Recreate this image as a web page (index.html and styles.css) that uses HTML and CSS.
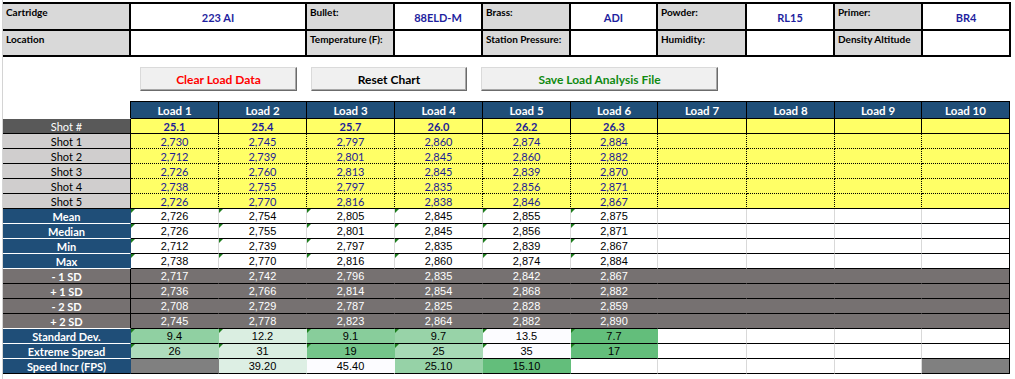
FILE: index.html
```html
<!DOCTYPE html>
<html>
<head>
<meta charset="utf-8">
<link rel="stylesheet" href="styles.css">
</head>
<body>
<div class="sheet">
  <div class="info">
    <div class="lbl">Cartridge</div><div class="val">223 AI</div>
    <div class="lbl">Bullet:</div><div class="val">88ELD-M</div>
    <div class="lbl">Brass:</div><div class="val">ADI</div>
    <div class="lbl">Powder:</div><div class="val">RL15</div>
    <div class="lbl">Primer:</div><div class="val">BR4</div>
    <div class="lbl">Location</div><div class="val"></div>
    <div class="lbl">Temperature (F):</div><div class="val"></div>
    <div class="lbl">Station Pressure:</div><div class="val"></div>
    <div class="lbl">Humidity:</div><div class="val"></div>
    <div class="lbl">Density Altitude</div><div class="val"></div>
  </div>

  <div class="buttons">
    <div class="btn red">Clear Load Data</div>
    <div class="btn">Reset Chart</div>
    <div class="btn grn">Save Load Analysis File</div>
  </div>

  <div class="tbl">
    <div class="corner"></div>
    <div class="hd">Load 1</div><div class="hd">Load 2</div><div class="hd">Load 3</div><div class="hd">Load 4</div><div class="hd">Load 5</div><div class="hd">Load 6</div><div class="hd">Load 7</div><div class="hd">Load 8</div><div class="hd">Load 9</div><div class="hd">Load 10</div>

    <div class="lb dk">Shot #</div>
    <div class="ys">25.1</div><div class="ys">25.4</div><div class="ys">25.7</div><div class="ys">26.0</div><div class="ys">26.2</div><div class="ys">26.3</div><div class="ys"></div><div class="ys"></div><div class="ys"></div><div class="ys"></div>

    <div class="lb lt">Shot 1</div>
    <div class="yd">2,730</div><div class="yd">2,745</div><div class="yd">2,797</div><div class="yd">2,860</div><div class="yd">2,874</div><div class="yd">2,884</div><div class="yd"></div><div class="yd"></div><div class="yd"></div><div class="yd"></div>

    <div class="lb lt">Shot 2</div>
    <div class="yd">2,712</div><div class="yd">2,739</div><div class="yd">2,801</div><div class="yd">2,845</div><div class="yd">2,860</div><div class="yd">2,882</div><div class="yd"></div><div class="yd"></div><div class="yd"></div><div class="yd"></div>

    <div class="lb lt">Shot 3</div>
    <div class="yd">2,726</div><div class="yd">2,760</div><div class="yd">2,813</div><div class="yd">2,845</div><div class="yd">2,839</div><div class="yd">2,870</div><div class="yd"></div><div class="yd"></div><div class="yd"></div><div class="yd"></div>

    <div class="lb lt">Shot 4</div>
    <div class="yd">2,738</div><div class="yd">2,755</div><div class="yd">2,797</div><div class="yd">2,835</div><div class="yd">2,856</div><div class="yd">2,871</div><div class="yd"></div><div class="yd"></div><div class="yd"></div><div class="yd"></div>

    <div class="lb lt">Shot 5</div>
    <div class="yd last">2,726</div><div class="yd last">2,770</div><div class="yd last">2,816</div><div class="yd last">2,838</div><div class="yd last">2,846</div><div class="yd last">2,867</div><div class="yd last"></div><div class="yd last"></div><div class="yd last"></div><div class="yd last"></div>

    <div class="lb bl">Mean</div>
    <div class="w n t">2,726</div><div class="w n t">2,754</div><div class="w n t">2,805</div><div class="w n t">2,845</div><div class="w n t">2,855</div><div class="w n t">2,875</div><div class="w"></div><div class="w"></div><div class="w"></div><div class="w"></div>

    <div class="lb bl">Median</div>
    <div class="w n t">2,726</div><div class="w n t">2,755</div><div class="w n t">2,801</div><div class="w n t">2,845</div><div class="w n t">2,856</div><div class="w n t">2,871</div><div class="w"></div><div class="w"></div><div class="w"></div><div class="w"></div>

    <div class="lb bl">Min</div>
    <div class="w n t">2,712</div><div class="w n t">2,739</div><div class="w n t">2,797</div><div class="w n t">2,835</div><div class="w n t">2,839</div><div class="w n t">2,867</div><div class="w"></div><div class="w"></div><div class="w"></div><div class="w"></div>

    <div class="lb bl">Max</div>
    <div class="w n t">2,738</div><div class="w n t">2,770</div><div class="w n t">2,816</div><div class="w n t">2,860</div><div class="w n t">2,874</div><div class="w n t">2,884</div><div class="w"></div><div class="w"></div><div class="w"></div><div class="w"></div>

    <div class="lb gr">- 1 SD</div>
    <div class="g n">2,717</div><div class="g n">2,742</div><div class="g n">2,796</div><div class="g n">2,835</div><div class="g n">2,842</div><div class="g n">2,867</div><div class="g"></div><div class="g"></div><div class="g"></div><div class="g"></div>

    <div class="lb gr">+ 1 SD</div>
    <div class="g n">2,736</div><div class="g n">2,766</div><div class="g n">2,814</div><div class="g n">2,854</div><div class="g n">2,868</div><div class="g n">2,882</div><div class="g"></div><div class="g"></div><div class="g"></div><div class="g"></div>

    <div class="lb gr">- 2 SD</div>
    <div class="g n">2,708</div><div class="g n">2,729</div><div class="g n">2,787</div><div class="g n">2,825</div><div class="g n">2,828</div><div class="g n">2,859</div><div class="g"></div><div class="g"></div><div class="g"></div><div class="g"></div>

    <div class="lb gr wb">+ 2 SD</div>
    <div class="g n">2,745</div><div class="g n">2,778</div><div class="g n">2,823</div><div class="g n">2,864</div><div class="g n">2,882</div><div class="g n">2,890</div><div class="g"></div><div class="g"></div><div class="g"></div><div class="g"></div>

    <div class="lb bl">Standard Dev.</div>
    <div class="w f n t" style="background:#90d0a2">9.4</div><div class="w f n t" style="background:#daeee1">12.2</div><div class="w f n t" style="background:#88cd9b">9.1</div><div class="w f n t" style="background:#98d3a8">9.7</div><div class="w f n t" style="background:#fcfcff">13.5</div><div class="w f n t" style="background:#63be7b">7.7</div><div class="w"></div><div class="w"></div><div class="w"></div><div class="w"></div>

    <div class="lb bl">Extreme Spread</div>
    <div class="w f n t" style="background:#aedcbc">26</div><div class="w f n t" style="background:#daeee1">31</div><div class="w f n t" style="background:#74c58a">19</div><div class="w f n t" style="background:#a7dab6">25</div><div class="w f n t" style="background:#fcfcff">35</div><div class="w f n t" style="background:#63be7b">17</div><div class="w"></div><div class="w"></div><div class="w"></div><div class="w"></div>

    <div class="lb bl endl">Speed Incr (FPS)</div>
    <div class="w f" style="background:#808080"></div><div class="w f n" style="background:#ddefe4">39.20</div><div class="w f n" style="background:#fcfcff">45.40</div><div class="w f n" style="background:#96d2a7">25.10</div><div class="w f n" style="background:#63be7b">15.10</div><div class="w"></div><div class="w"></div><div class="w"></div><div class="w"></div><div class="w f" style="background:#808080"></div>
  </div>
</div>
</body>
</html>
```

FILE: styles.css
```css
* {
  box-sizing: border-box;
}

body {
  margin: 0;
  background: #fff;
  font-family: Lato, "Liberation Sans", sans-serif;
  color: #000;
}

.sheet {
  margin-left: 2px;
  border-left: 1px solid #d4d4d4;
  width: 1013px;
  height: 379px;
  padding-top: 2px;
}

/* ---------- info header ---------- */
.info {
  display: grid;
  grid-template-columns: 126px 174px 86px 86px 86px 85px 87px 86px 86px 86px;
  grid-template-rows: 25px 24px;
  gap: 2px;
  background: #000;
  padding: 2px 2px 2px 0;
  width: 1008px;
}

.lbl {
  background: #d9d9d9;
  font-weight: 700;
  font-size: 10px;
  line-height: 12px;
  padding: 2px 3px 0 3px;
  white-space: nowrap;
}

.val {
  background: #fff;
  color: #1f1fa0;
  font-weight: 700;
  font-size: 11px;
  display: flex;
  align-items: center;
  justify-content: center;
  padding-top: 2px;
}

/* ---------- buttons ---------- */
.buttons {
  margin-top: 10px;
  display: flex;
  gap: 14px;
  padding-left: 137px;
}

.btn {
  height: 24px;
  width: 156px;
  background: #f0f0f0;
  border: 1px solid;
  border-color: #dadada #6b6b6b #6b6b6b #dadada;
  box-shadow: inset -1px -1px 0 #a8a8a8;
  font-weight: 700;
  font-size: 12px;
  display: flex;
  align-items: center;
  justify-content: center;
}

.btn:first-child {
  width: 157px;
}

.btn.red {
  color: #ff0000;
}

.btn.grn {
  color: #118a11;
  width: 237px;
}

/* ---------- main table ---------- */
.tbl {
  margin-top: 10px;
  display: grid;
  grid-template-columns: 128px 88px 88px 88px 88px 88px 87px 89px 88px 87px 88px;
  grid-template-rows: 18px repeat(17, 15px);
  width: 1007px;
}

.tbl > div {
  position: relative;
  display: flex;
  align-items: flex-end;
  justify-content: center;
  font-size: 11px;
  line-height: 13px;
  white-space: nowrap;
  border-right: 1px solid #000;
  border-bottom: 1px solid #000;
}

.tbl > div:nth-child(11n) {
  border-right: 1px solid #000;
}

.corner {
  border-bottom-color: transparent !important;
}

.hd {
  background: #1f4e78;
  color: #fff;
  font-weight: 700;
  font-size: 11.5px !important;
  border-top: 1px solid #000;
  align-items: center !important;
}

.lb {
  color: #fff;
}

.lb.dk {
  background: #595959;
}

.lb.lt {
  background: #d0cece;
  color: #000;
}

.lb.bl {
  background: #1f4e78;
  font-weight: 700;
  border-right-color: #1f4e78 !important;
  border-bottom-color: #fff !important;
}

.lb.bl.endl {
  border-bottom-color: #000 !important;
}

.lb.gr {
  background: #767171;
  font-weight: 700;
}

.lb.gr.wb {
  border-bottom-color: #fff !important;
}

.ys {
  background: #ffff66;
  color: #1c1c96;
  font-weight: 700;
}

.yd {
  background: #ffff66;
  color: #1c1c96;
  border-right-style: dotted !important;
  border-bottom-style: dotted !important;
}

.tbl > .yd:nth-child(11n) {
  border-right-style: solid !important;
}

.yd.last {
  border-bottom-style: solid !important;
}

.w {
  background: #fff;
  border-right-color: #d9d9d9 !important;
}

.tbl > .w:nth-child(11n) {
  border-right-color: #000 !important;
}

.w.f {
  border-right-color: transparent !important;
}

.g {
  background: #767171;
  color: #fff;
  border-right-color: #767171 !important;
}

.tbl > .g:nth-child(11n) {
  border-right-color: #000 !important;
}

.n {
  font-family: "Liberation Sans", Arial, sans-serif;
  line-height: 12px;
}

.t::before {
  content: "";
  position: absolute;
  left: 0;
  top: 0;
  border-top: 4px solid #1e7e1e;
  border-right: 4px solid transparent;
}
```
